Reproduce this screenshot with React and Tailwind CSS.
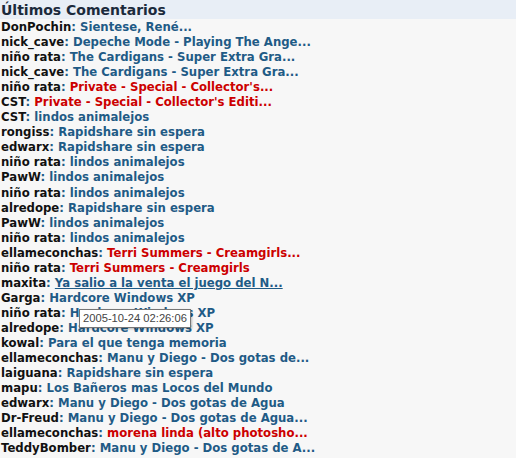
const rows = [
  ["DonPochin", "Sientese, René...", "b"],
  ["nick_cave", "Depeche Mode - Playing The Ange...", "b"],
  ["niño rata", "The Cardigans - Super Extra Gra...", "b"],
  ["nick_cave", "The Cardigans - Super Extra Gra...", "b"],
  ["niño rata", "Private - Special - Collector's...", "r"],
  ["CST", "Private - Special - Collector's Editi...", "r"],
  ["CST", "lindos animalejos", "b"],
  ["rongiss", "Rapidshare sin espera", "b"],
  ["edwarx", "Rapidshare sin espera", "b"],
  ["niño rata", "lindos animalejos", "b"],
  ["PawW", "lindos animalejos", "b"],
  ["niño rata", "lindos animalejos", "b"],
  ["alredope", "Rapidshare sin espera", "b"],
  ["PawW", "lindos animalejos", "b"],
  ["niño rata", "lindos animalejos", "b"],
  ["ellameconchas", "Terri Summers - Creamgirls...", "r"],
  ["niño rata", "Terri Summers - Creamgirls", "r"],
  ["maxita", "Ya salio a la venta el juego del N...", "u"],
  ["Garga", "Hardcore Windows XP", "b"],
  ["niño rata", "Hardcore Windows XP", "b"],
  ["alredope", "Hardcore Windows XP", "b"],
  ["kowal", "Para el que tenga memoria", "b"],
  ["ellameconchas", "Manu y Diego - Dos gotas de...", "b"],
  ["laiguana", "Rapidshare sin espera", "b"],
  ["mapu", "Los Bañeros mas Locos del Mundo", "b"],
  ["edwarx", "Manu y Diego - Dos gotas de Agua", "b"],
  ["Dr-Freud", "Manu y Diego - Dos gotas de Agua...", "b"],
  ["ellameconchas", "morena linda (alto photosho...", "r"],
  ["TeddyBomber", "Manu y Diego - Dos gotas de A...", "b"],
];

export default function App() {
  return (
    <div className="w-[518px] h-[458px] bg-white overflow-hidden relative" style={{ fontFamily: '"DejaVu Sans", Verdana, sans-serif' }}>
      <div className="w-[516px] h-[458px] bg-[#f7f7f7]">
        <div className="h-[19px] pt-[1px] bg-[#e8eef6] pl-[1px] text-[14px] leading-[18px] font-bold text-[#1b2a3c]">
          Últimos Comentarios
        </div>
        <div className="flex flex-col pt-[1px] pl-[1px] text-[11.7px] leading-[15.05px] font-bold">
          {rows.map(([n, t, k], i) => (
            <div key={i} className="whitespace-nowrap">
              <span className="text-[#111]">{n}</span>
              <span className="text-[#1f5b86]">: </span>
              <span
                className={
                  k === "r"
                    ? "text-[#cc0000]"
                    : k === "u"
                    ? "text-[#1f5b86] underline"
                    : "text-[#1f5b86]"
                }
              >
                {t}
              </span>
            </div>
          ))}
        </div>
      </div>
      <div
        className="absolute left-[79px] top-[309px] h-[19px] px-[3px] bg-white border border-[#767676] text-[11.2px] leading-[17px] text-[#444] shadow-[1px_1px_2px_rgba(0,0,0,0.25)] whitespace-nowrap"
        style={{ fontFamily: '"Liberation Sans", Arial, sans-serif' }}
      >
        2005-10-24 02:26:06
      </div>
    </div>
  );
}
